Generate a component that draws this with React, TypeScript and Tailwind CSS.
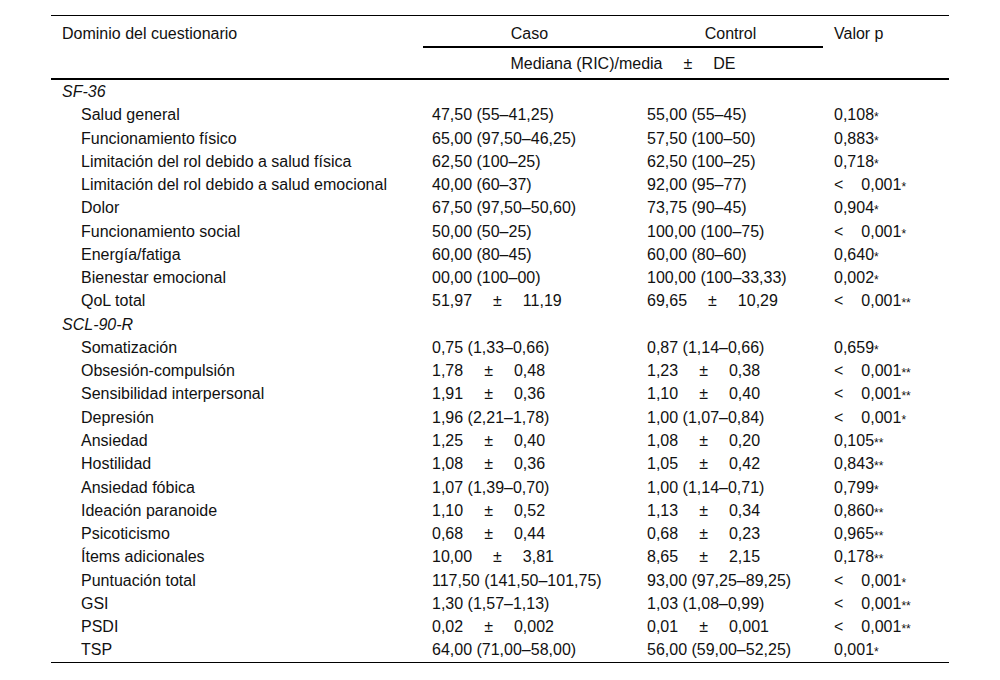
import React from 'react';

type Cell = React.ReactNode;

const PM = ({ a, b }: { a: string; b: string }) => (
  <span>
    {a}
    <span className="inline-block mx-[21px]">±</span>
    {b}
  </span>
);

const P = ({ lt, v, s }: { lt?: boolean; v: string; s: string }) => (
  <span>
    {lt && <span className="inline-block mr-[18px]">&lt;</span>}
    {v}
    <sup className="text-[12px] relative top-[1px]">{s}</sup>
  </span>
);

const rows: { label: string; section?: boolean; caso?: Cell; control?: Cell; p?: Cell }[] = [
  { label: 'SF-36', section: true },
  { label: 'Salud general', caso: '47,50 (55–41,25)', control: '55,00 (55–45)', p: <P v="0,108" s="*" /> },
  { label: 'Funcionamiento físico', caso: '65,00 (97,50–46,25)', control: '57,50 (100–50)', p: <P v="0,883" s="*" /> },
  { label: 'Limitación del rol debido a salud física', caso: '62,50 (100–25)', control: '62,50 (100–25)', p: <P v="0,718" s="*" /> },
  { label: 'Limitación del rol debido a salud emocional', caso: '40,00 (60–37)', control: '92,00 (95–77)', p: <P lt v="0,001" s="*" /> },
  { label: 'Dolor', caso: '67,50 (97,50–50,60)', control: '73,75 (90–45)', p: <P v="0,904" s="*" /> },
  { label: 'Funcionamiento social', caso: '50,00 (50–25)', control: '100,00 (100–75)', p: <P lt v="0,001" s="*" /> },
  { label: 'Energía/fatiga', caso: '60,00 (80–45)', control: '60,00 (80–60)', p: <P v="0,640" s="*" /> },
  { label: 'Bienestar emocional', caso: '00,00 (100–00)', control: '100,00 (100–33,33)', p: <P v="0,002" s="*" /> },
  { label: 'QoL total', caso: <PM a="51,97" b="11,19" />, control: <PM a="69,65" b="10,29" />, p: <P lt v="0,001" s="**" /> },
  { label: 'SCL-90-R', section: true },
  { label: 'Somatización', caso: '0,75 (1,33–0,66)', control: '0,87 (1,14–0,66)', p: <P v="0,659" s="*" /> },
  { label: 'Obsesión-compulsión', caso: <PM a="1,78" b="0,48" />, control: <PM a="1,23" b="0,38" />, p: <P lt v="0,001" s="**" /> },
  { label: 'Sensibilidad interpersonal', caso: <PM a="1,91" b="0,36" />, control: <PM a="1,10" b="0,40" />, p: <P lt v="0,001" s="**" /> },
  { label: 'Depresión', caso: '1,96 (2,21–1,78)', control: '1,00 (1,07–0,84)', p: <P lt v="0,001" s="*" /> },
  { label: 'Ansiedad', caso: <PM a="1,25" b="0,40" />, control: <PM a="1,08" b="0,20" />, p: <P v="0,105" s="**" /> },
  { label: 'Hostilidad', caso: <PM a="1,08" b="0,36" />, control: <PM a="1,05" b="0,42" />, p: <P v="0,843" s="**" /> },
  { label: 'Ansiedad fóbica', caso: '1,07 (1,39–0,70)', control: '1,00 (1,14–0,71)', p: <P v="0,799" s="*" /> },
  { label: 'Ideación paranoide', caso: <PM a="1,10" b="0,52" />, control: <PM a="1,13" b="0,34" />, p: <P v="0,860" s="**" /> },
  { label: 'Psicoticismo', caso: <PM a="0,68" b="0,44" />, control: <PM a="0,68" b="0,23" />, p: <P v="0,965" s="**" /> },
  { label: 'Ítems adicionales', caso: <PM a="10,00" b="3,81" />, control: <PM a="8,65" b="2,15" />, p: <P v="0,178" s="**" /> },
  { label: 'Puntuación total', caso: '117,50 (141,50–101,75)', control: '93,00 (97,25–89,25)', p: <P lt v="0,001" s="*" /> },
  { label: 'GSI', caso: '1,30 (1,57–1,13)', control: '1,03 (1,08–0,99)', p: <P lt v="0,001" s="**" /> },
  { label: 'PSDI', caso: <PM a="0,02" b="0,002" />, control: <PM a="0,01" b="0,001" />, p: <P lt v="0,001" s="**" /> },
  { label: 'TSP', caso: '64,00 (71,00–58,00)', control: '56,00 (59,00–52,25)', p: <P v="0,001" s="*" /> },
];

const cols = 'grid grid-cols-[371px_215px_187px_125px]';

export default function App() {
  return (
    <div className="min-h-screen bg-white pt-[15px] text-[16px] text-[#111]" style={{ fontFamily: '"Liberation Sans", Arial, sans-serif' }}>
      <div className="w-[898px] mx-auto border-t border-black border-b">
        {/* cabecera */}
        <div className={`${cols} border-b-2 border-black`}>
          <div className="row-span-2 pl-[11px] pt-[6px]">Dominio del cuestionario</div>
          <div className="col-span-2 h-[30px] grid grid-cols-[215px_187px] pt-[6px]">
            <div className="text-center">Caso</div>
            <div className="text-center">Control</div>
          </div>
          <div className="row-span-2 pl-[10px] pt-[6px]">Valor p</div>
          <div className="col-span-2 ml-[1px] mr-[1px] border-t-2 border-black h-[32px] pt-[2px] flex items-center justify-center">
            <span>
              Mediana (RIC)/media
              <span className="inline-block mx-[21px]">±</span>
              DE
            </span>
          </div>
        </div>
        {/* filas */}
        <div>
          {rows.map((r) => (
            <div key={r.label} className={`${cols} h-[23.27px] items-center`}>
              <div className={r.section ? 'pl-[11px] italic' : 'pl-[30px]'}>{r.label}</div>
              <div className="pl-[10px]">{r.caso}</div>
              <div className="pl-[10px]">{r.control}</div>
              <div className="pl-[10px]">{r.p}</div>
            </div>
          ))}
        </div>
      </div>
    </div>
  );
}
